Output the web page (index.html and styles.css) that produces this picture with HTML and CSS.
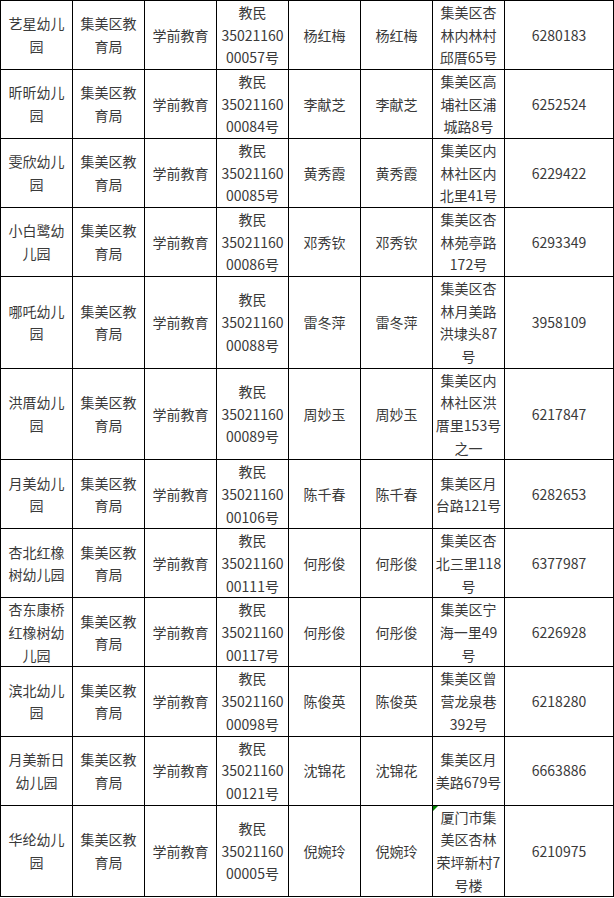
FILE: index.html
```html
<!DOCTYPE html>
<html lang="zh-CN">
<head>
<meta charset="utf-8">
<title>幼儿园名单</title>
<link rel="stylesheet" href="styles.css">
</head>
<body>
<table class="list">
<colgroup>
<col class="c"><col class="c"><col class="c"><col class="c"><col class="c"><col class="c"><col class="c"><col class="cw">
</colgroup>
<tbody>
<tr><td>艺星幼儿园</td><td>集美区教育局</td><td>学前教育</td><td>教民<br>35021160<br>00057号</td><td>杨红梅</td><td>杨红梅</td><td>集美区杏林内林村邱厝65号</td><td>6280183</td></tr>
<tr><td>昕昕幼儿园</td><td>集美区教育局</td><td>学前教育</td><td>教民<br>35021160<br>00084号</td><td>李献芝</td><td>李献芝</td><td>集美区高埔社区浦城路8号</td><td>6252524</td></tr>
<tr><td>雯欣幼儿园</td><td>集美区教育局</td><td>学前教育</td><td>教民<br>35021160<br>00085号</td><td>黄秀霞</td><td>黄秀霞</td><td>集美区内林社区内北里41号</td><td>6229422</td></tr>
<tr><td>小白鹭幼儿园</td><td>集美区教育局</td><td>学前教育</td><td>教民<br>35021160<br>00086号</td><td>邓秀钦</td><td>邓秀钦</td><td>集美区杏林苑亭路172号</td><td>6293349</td></tr>
<tr><td>哪吒幼儿园</td><td>集美区教育局</td><td>学前教育</td><td>教民<br>35021160<br>00088号</td><td>雷冬萍</td><td>雷冬萍</td><td>集美区杏林月美路洪埭头87号</td><td>3958109</td></tr>
<tr><td>洪厝幼儿园</td><td>集美区教育局</td><td>学前教育</td><td>教民<br>35021160<br>00089号</td><td>周妙玉</td><td>周妙玉</td><td>集美区内林社区洪厝里153号之一</td><td>6217847</td></tr>
<tr><td>月美幼儿园</td><td>集美区教育局</td><td>学前教育</td><td>教民<br>35021160<br>00106号</td><td>陈千春</td><td>陈千春</td><td>集美区月台路121号</td><td>6282653</td></tr>
<tr><td>杏北红橡树幼儿园</td><td>集美区教育局</td><td>学前教育</td><td>教民<br>35021160<br>00111号</td><td>何彤俊</td><td>何彤俊</td><td>集美区杏北三里118号</td><td>6377987</td></tr>
<tr><td>杏东康桥红橡树幼儿园</td><td>集美区教育局</td><td>学前教育</td><td>教民<br>35021160<br>00117号</td><td>何彤俊</td><td>何彤俊</td><td>集美区宁海一里49号</td><td>6226928</td></tr>
<tr><td>滨北幼儿园</td><td>集美区教育局</td><td>学前教育</td><td>教民<br>35021160<br>00098号</td><td>陈俊英</td><td>陈俊英</td><td>集美区曾营龙泉巷392号</td><td>6218280</td></tr>
<tr><td>月美新日幼儿园</td><td>集美区教育局</td><td>学前教育</td><td>教民<br>35021160<br>00121号</td><td>沈锦花</td><td>沈锦花</td><td>集美区月美路679号</td><td>6663886</td></tr>
<tr><td>华纶幼儿园</td><td>集美区教育局</td><td>学前教育</td><td>教民<br>35021160<br>00005号</td><td>倪婉玲</td><td>倪婉玲</td><td class="noted">厦门市集美区杏林荣坪新村7号楼</td><td>6210975</td></tr>
</tbody>
</table>
</body>
</html>
```
FILE: styles.css
```css
html, body {
  margin: 0;
  padding: 0;
  background: #fff;
}
.list {
  border-collapse: collapse;
  table-layout: fixed;
  width: 613px;
  font-family: "Noto Sans CJK SC", "Microsoft YaHei", sans-serif;
  font-size: 14px;
  line-height: 22.67px;
  color: #3a3a3a;
}
.list col.c { width: 72px; }
.list col.cw { width: 109px; }
.list td {
  border: 1px solid #000;
  padding: 0 2px;
  text-align: center;
  vertical-align: middle;
  overflow-wrap: anywhere;
}
.list td.noted {
  position: relative;
}
.list td.noted::before {
  content: "";
  position: absolute;
  left: 0;
  top: 0;
  width: 0;
  height: 0;
  border-top: 5px solid #008000;
  border-right: 5px solid transparent;
}
```
